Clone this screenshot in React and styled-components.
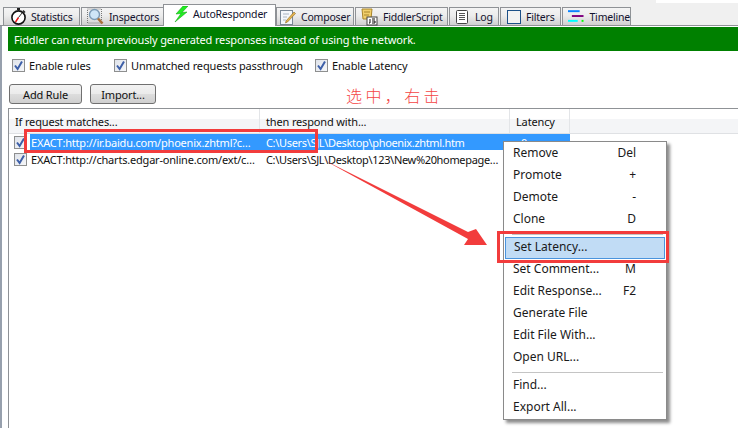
import React from "react";
import styled, { createGlobalStyle } from "styled-components";

const FONT = `"Noto Sans", "Open Sans", sans-serif`;

const Global = createGlobalStyle`
  html, body { margin: 0; padding: 0; background: #fff; }
  body { font-family: ${FONT}; font-size: 11px; color: #111; letter-spacing: -0.15px; }
  * { box-sizing: border-box; }
`;

const Page = styled.div`
  position: relative;
  width: 738px;
  height: 428px;
  overflow: hidden;
  background: #fff;
`;
const TopBar = styled.div`
  position: relative;
  height: 26px;
  background: #f0f0f0;
  border-bottom: 1px solid #8f9296;
  padding-left: 3px;
  display: flex;
  align-items: flex-end;
  gap: 1px;
`;
const Notch = styled.div`
  position: absolute;
  right: 0;
  top: 0;
  width: 82px;
  height: 3px;
  background: #fff;
`;
const Tab = styled.div`
  width: ${(p) => p.$w}px;
  height: ${(p) => (p.$active ? 22 : 18)}px;
  margin-bottom: ${(p) => (p.$active ? -1 : 0)}px;
  margin-left: ${(p) => (p.$active ? -2 : 0)}px;
  margin-right: ${(p) => (p.$active ? -1 : 0)}px;
  padding-left: ${(p) => p.$pad}px;
  padding-bottom: ${(p) => (p.$active ? 3 : 0)}px;
  display: flex;
  align-items: center;
  gap: ${(p) => p.$gap}px;
  border: 1px solid #8f9296;
  border-bottom: none;
  background: ${(p) =>
    p.$active ? "#fff" : "linear-gradient(#f4f4f4 0%, #ececec 45%, #d0d0d0 100%)"};
  position: relative;
  z-index: ${(p) => (p.$active ? 2 : 1)};
  color: #12122e;
  font-size: 10.5px;
  letter-spacing: -0.2px;
  white-space: nowrap;
`;
const Body = styled.div`
  display: flex;
  height: 402px;
`;
const LeftEdge = styled.div`
  width: 2px;
  background: #97a0ad;
`;
const Panel = styled.div`
  flex: 1;
  margin-left: 6px;
  padding-top: 1px;
  display: flex;
  flex-direction: column;
  min-width: 0;
`;
const Banner = styled.div`
  height: 24px;
  background: #008000;
  color: #fff;
  padding-left: 6px;
  display: flex;
  align-items: center;
  white-space: nowrap;
`;
const Options = styled.div`
  height: 28px;
  display: flex;
  align-items: center;
  padding-left: 4px;
`;
const CheckLabel = styled.label`
  width: ${(p) => p.$w}px;
  display: flex;
  align-items: center;
  gap: 4px;
  white-space: nowrap;
`;
const Box = styled.span`
  width: 13px;
  height: 13px;
  flex: none;
  border: 1px solid #8e8f8f;
  background: linear-gradient(135deg, #dfe3ea, #f6f7f9);
  display: flex;
  align-items: center;
  justify-content: center;
`;
const RowBox = styled(Box)`
  margin-top: 2px;
`;
const Buttons = styled.div`
  height: 29px;
  display: flex;
  gap: 8px;
  padding: 5px 0 0 1px;
  align-items: flex-start;
`;
const Button = styled.div`
  width: ${(p) => p.$w}px;
  height: 20px;
  border: 1px solid #707070;
  border-radius: 3px;
  background: linear-gradient(#f2f2f2 0%, #ebebeb 48%, #dddddd 52%, #cfcfcf 100%);
  display: flex;
  align-items: center;
  justify-content: center;
`;
const List = styled.div`
  flex: 1;
  border-top: 1px solid #8f9296;
  border-left: 1px solid #8f9296;
`;
const Header = styled.div`
  display: grid;
  grid-template-columns: 251px 250px 60px 1fr;
  height: 25px;
  border-bottom: 1px solid #dfe1e4;
  background: linear-gradient(#fff 0%, #fff 40%, #f4f5f7 41%, #f4f5f7 100%);
`;
const HeadCell = styled.div`
  padding-left: 6px;
  display: flex;
  align-items: center;
  border-right: 1px solid #e3e5e8;
  white-space: nowrap;
  &:last-child { border-right: none; }
`;
const Row = styled.div`
  display: flex;
  height: 17px;
  align-items: flex-start;
  padding-left: 5px;
  white-space: nowrap;
`;
const Cells = styled.div`
  display: grid;
  grid-template-columns: 235px 250px 55px;
  height: 16px;
  margin-left: 3px;
  align-items: center;
  background: ${(p) => (p.$selected ? "#3399ff" : "transparent")};
  color: ${(p) => (p.$selected ? "#fff" : "#111")};
`;
const Cell = styled.div`
  padding-left: ${(p) => p.$pad ?? 1}px;
  overflow: hidden;
  letter-spacing: ${(p) => p.$track ?? -0.2}px;
`;
const Hint = styled.div`
  position: absolute;
  left: 346px;
  top: 83px;
  font-family: "Noto Sans CJK SC", sans-serif;
  font-size: 16px;
  font-weight: 300;
  letter-spacing: 3.4px;
  color: #f44444;
  white-space: nowrap;
`;
const Menu = styled.div`
  position: absolute;
  left: 503px;
  top: 141px;
  width: 164px;
  height: 279px;
  padding: 1px;
  background: #fff;
  border: 1px solid #8a8a8a;
  box-shadow: 3px 3px 3px rgba(0, 0, 0, 0.45);
  display: flex;
  flex-direction: column;
`;
const Item = styled.div`
  height: 22px;
  flex: none;
  display: flex;
  align-items: center;
  justify-content: space-between;
  padding: 0 29px 4px 8px;
  color: #1a1a1a;
  font-size: 12px;
  letter-spacing: 0;
  white-space: nowrap;
  ${(p) =>
    p.$active &&
    `background: #c1dcf5; border: 1px solid #4a94dd; padding: 0 28px 3px 8px;`}
`;
const Sep = styled.div`
  height: 6px;
  flex: none;
  display: flex;
  align-items: center;
  padding: 0 2px 0 7px;
  &::after { content: ""; flex: 1; height: 1px; background: #c4c4c4; }
`;
const RedBox = styled.div`
  position: absolute;
  left: ${(p) => p.$x}px;
  top: ${(p) => p.$y}px;
  width: ${(p) => p.$w}px;
  height: ${(p) => p.$h}px;
  border: 3px solid #f23c3c;
  pointer-events: none;
`;
const Arrow = styled.svg`
  position: absolute;
  left: 0;
  top: 0;
`;

const Tick = () => (
  <svg width="11" height="11" viewBox="0 0 11 11">
    <path d="M2 5.5 L4.6 9 L9 1.5" fill="none" stroke="#3d5fa8" strokeWidth="2" />
  </svg>
);

const Stopwatch = () => (
  <svg width="17" height="17" viewBox="0 0 17 17">
    <rect x="7" y="0" width="3" height="2" fill="#222" />
    <path d="M13 2.5 L15 4.5" stroke="#222" strokeWidth="1.4" />
    <circle cx="8.5" cy="9.5" r="6.6" fill="#fff" stroke="#111" strokeWidth="1.6" />
    <path d="M8.5 9.5 L5.5 14" stroke="#e11" strokeWidth="1.4" />
    <path d="M8.5 9.5 L12 5" stroke="#333" strokeWidth="1" />
  </svg>
);
const Magnifier = () => (
  <svg width="17" height="17" viewBox="0 0 17 17">
    <rect x="0.5" y="1" width="14" height="14" fill="none" stroke="#777" strokeDasharray="1 1" />
    <circle cx="7.5" cy="6.5" r="5" fill="#cfe6f7" stroke="#7d9bb5" strokeWidth="1.4" />
    <path d="M11 10.5 L15.5 15.5" stroke="#a8703a" strokeWidth="2.6" />
  </svg>
);
const Bolt = () => (
  <svg width="15" height="17" viewBox="0 0 15 17">
    <path d="M9 0 L2 8 L7 7.5 L1 16 L13 6 L8 6.5 L14 0 Z" fill="#22ee22" stroke="#0a9a0a" strokeWidth="0.5" />
  </svg>
);
const Note = () => (
  <svg width="16" height="16" viewBox="0 0 16 16">
    <rect x="0.5" y="1.5" width="12" height="14" fill="#f4f7fb" stroke="#7a8796" />
    <path d="M3 5 H9 M3 8 H7 M3 11 H6" stroke="#a9b4c2" />
    <path d="M6 12 L14 3 L15.5 4.5 L7.5 13 L5.5 14 Z" fill="#e6b450" stroke="#8a6a20" strokeWidth="0.6" />
  </svg>
);
const Scroll = () => (
  <svg width="18" height="18" viewBox="0 0 18 18">
    <path d="M2 1 H12 L11 11 H3 Z" fill="#f1cf6b" stroke="#a9852a" />
    <path d="M4 4 H10 M4 7 H9" stroke="#a9852a" />
    <rect x="7" y="9" width="10" height="8" fill="#fff" stroke="#444" />
    <path d="M10 11 V15 H9 M12 11 H15 M12 13 H15 V15 H12" fill="none" stroke="#111" />
  </svg>
);
const LogIcon = () => (
  <svg width="12" height="14" viewBox="0 0 12 14">
    <rect x="0.5" y="0.5" width="11" height="13" rx="1" fill="#fff" stroke="#444" />
    <path d="M3 3.5 H9 M3 5.5 H9 M3 7.5 H9 M3 9.5 H9" stroke="#555" />
  </svg>
);
const FilterIcon = () => (
  <svg width="14" height="14" viewBox="0 0 14 14">
    <rect x="0.5" y="0.5" width="13" height="13" fill="#f2f2f2" stroke="#1c5088" />
  </svg>
);
const TimelineIcon = () => (
  <svg width="17" height="13" viewBox="0 0 17 13">
    <rect x="0" y="0" width="12" height="2" fill="#0a84ff" />
    <rect x="4" y="5" width="12" height="2" fill="#800080" />
    <rect x="0" y="10" width="10" height="2" fill="#00ffff" />
    <rect x="14" y="10" width="2" height="2" fill="#00ff00" />
  </svg>
);

const tabs = [
  { label: "Statistics", w: 77, pad: 6, gap: 4, icon: <Stopwatch /> },
  { label: "Inspectors", w: 83, pad: 5, gap: 5, icon: <Magnifier /> },
  { label: "AutoResponder", w: 113, pad: 10, gap: 4, icon: <Bolt />, active: true },
  { label: "Composer", w: 78, pad: 3, gap: 5, icon: <Note /> },
  { label: "FiddlerScript", w: 93, pad: 4, gap: 5, icon: <Scroll /> },
  { label: "Log", w: 50, pad: 6, gap: 7, icon: <LogIcon /> },
  { label: "Filters", w: 61, pad: 6, gap: 5, icon: <FilterIcon /> },
  { label: "Timeline", w: 69, pad: 5, gap: 5, icon: <TimelineIcon /> },
];

const menu = [
  ["Remove", "Del"],
  ["Promote", "+"],
  ["Demote", "-"],
  ["Clone", "D"],
  "sep",
  ["Set Latency...", "", true],
  ["Set Comment...", "M"],
  ["Edit Response...", "F2"],
  ["Generate File", ""],
  ["Edit File With...", ""],
  ["Open URL...", ""],
  "sep",
  ["Find...", ""],
  ["Export All...", ""],
];

export default function App() {
  return (
    <Page>
      <Global />
      <TopBar>
        <Notch />
        {tabs.map((t) => (
          <Tab key={t.label} $w={t.w} $pad={t.pad} $gap={t.gap} $active={t.active}>
            {t.icon}
            {t.label}
          </Tab>
        ))}
      </TopBar>
      <Body>
        <LeftEdge />
        <Panel>
          <Banner>Fiddler can return previously generated responses instead of using the network.</Banner>
          <Options>
            <CheckLabel $w={102}><Box><Tick /></Box>Enable rules</CheckLabel>
            <CheckLabel $w={201}><Box><Tick /></Box>Unmatched requests passthrough</CheckLabel>
            <CheckLabel $w={120}><Box><Tick /></Box>Enable Latency</CheckLabel>
          </Options>
          <Buttons>
            <Button $w={73}>Add Rule</Button>
            <Button $w={66}>Import...</Button>
          </Buttons>
          <List>
            <Header>
              <HeadCell>If request matches...</HeadCell>
              <HeadCell>then respond with...</HeadCell>
              <HeadCell>Latency</HeadCell>
              <HeadCell />
            </Header>
            <Row>
              <RowBox><Tick /></RowBox>
              <Cells $selected>
                <Cell>EXACT:http://ir.baidu.com/phoenix.zhtml?c…</Cell>
                <Cell $track={-0.33}>C:\Users\SJL\Desktop\phoenix.zhtml.htm</Cell>
                <Cell $pad={6}>0</Cell>
              </Cells>
            </Row>
            <Row>
              <RowBox><Tick /></RowBox>
              <Cells>
                <Cell>EXACT:http://charts.edgar-online.com/ext/c…</Cell>
                <Cell $track={-0.33}>C:\Users\SJL\Desktop\123\New%20homepage…</Cell>
              </Cells>
            </Row>
          </List>
        </Panel>
      </Body>
      <Hint>选中，右击</Hint>
      <Menu>
        {menu.map((m, i) =>
          typeof m === "string" ? (
            <Sep key={i} />
          ) : (
            <Item key={m[0]} $active={m[2]}>
              <span>{m[0]}</span>
              <span>{m[1]}</span>
            </Item>
          )
        )}
      </Menu>
      <RedBox $x={24} $y={129} $w={294} $h={24} />
      <RedBox $x={497} $y={231} $w={172} $h={32} />
      <Arrow width="738" height="428" viewBox="0 0 738 428">
        <path d="M322 159 L468 232 L476 229 L487 245 L464 245 L468 239 Z" fill="#f23c3c" />
      </Arrow>
    </Page>
  );
}
